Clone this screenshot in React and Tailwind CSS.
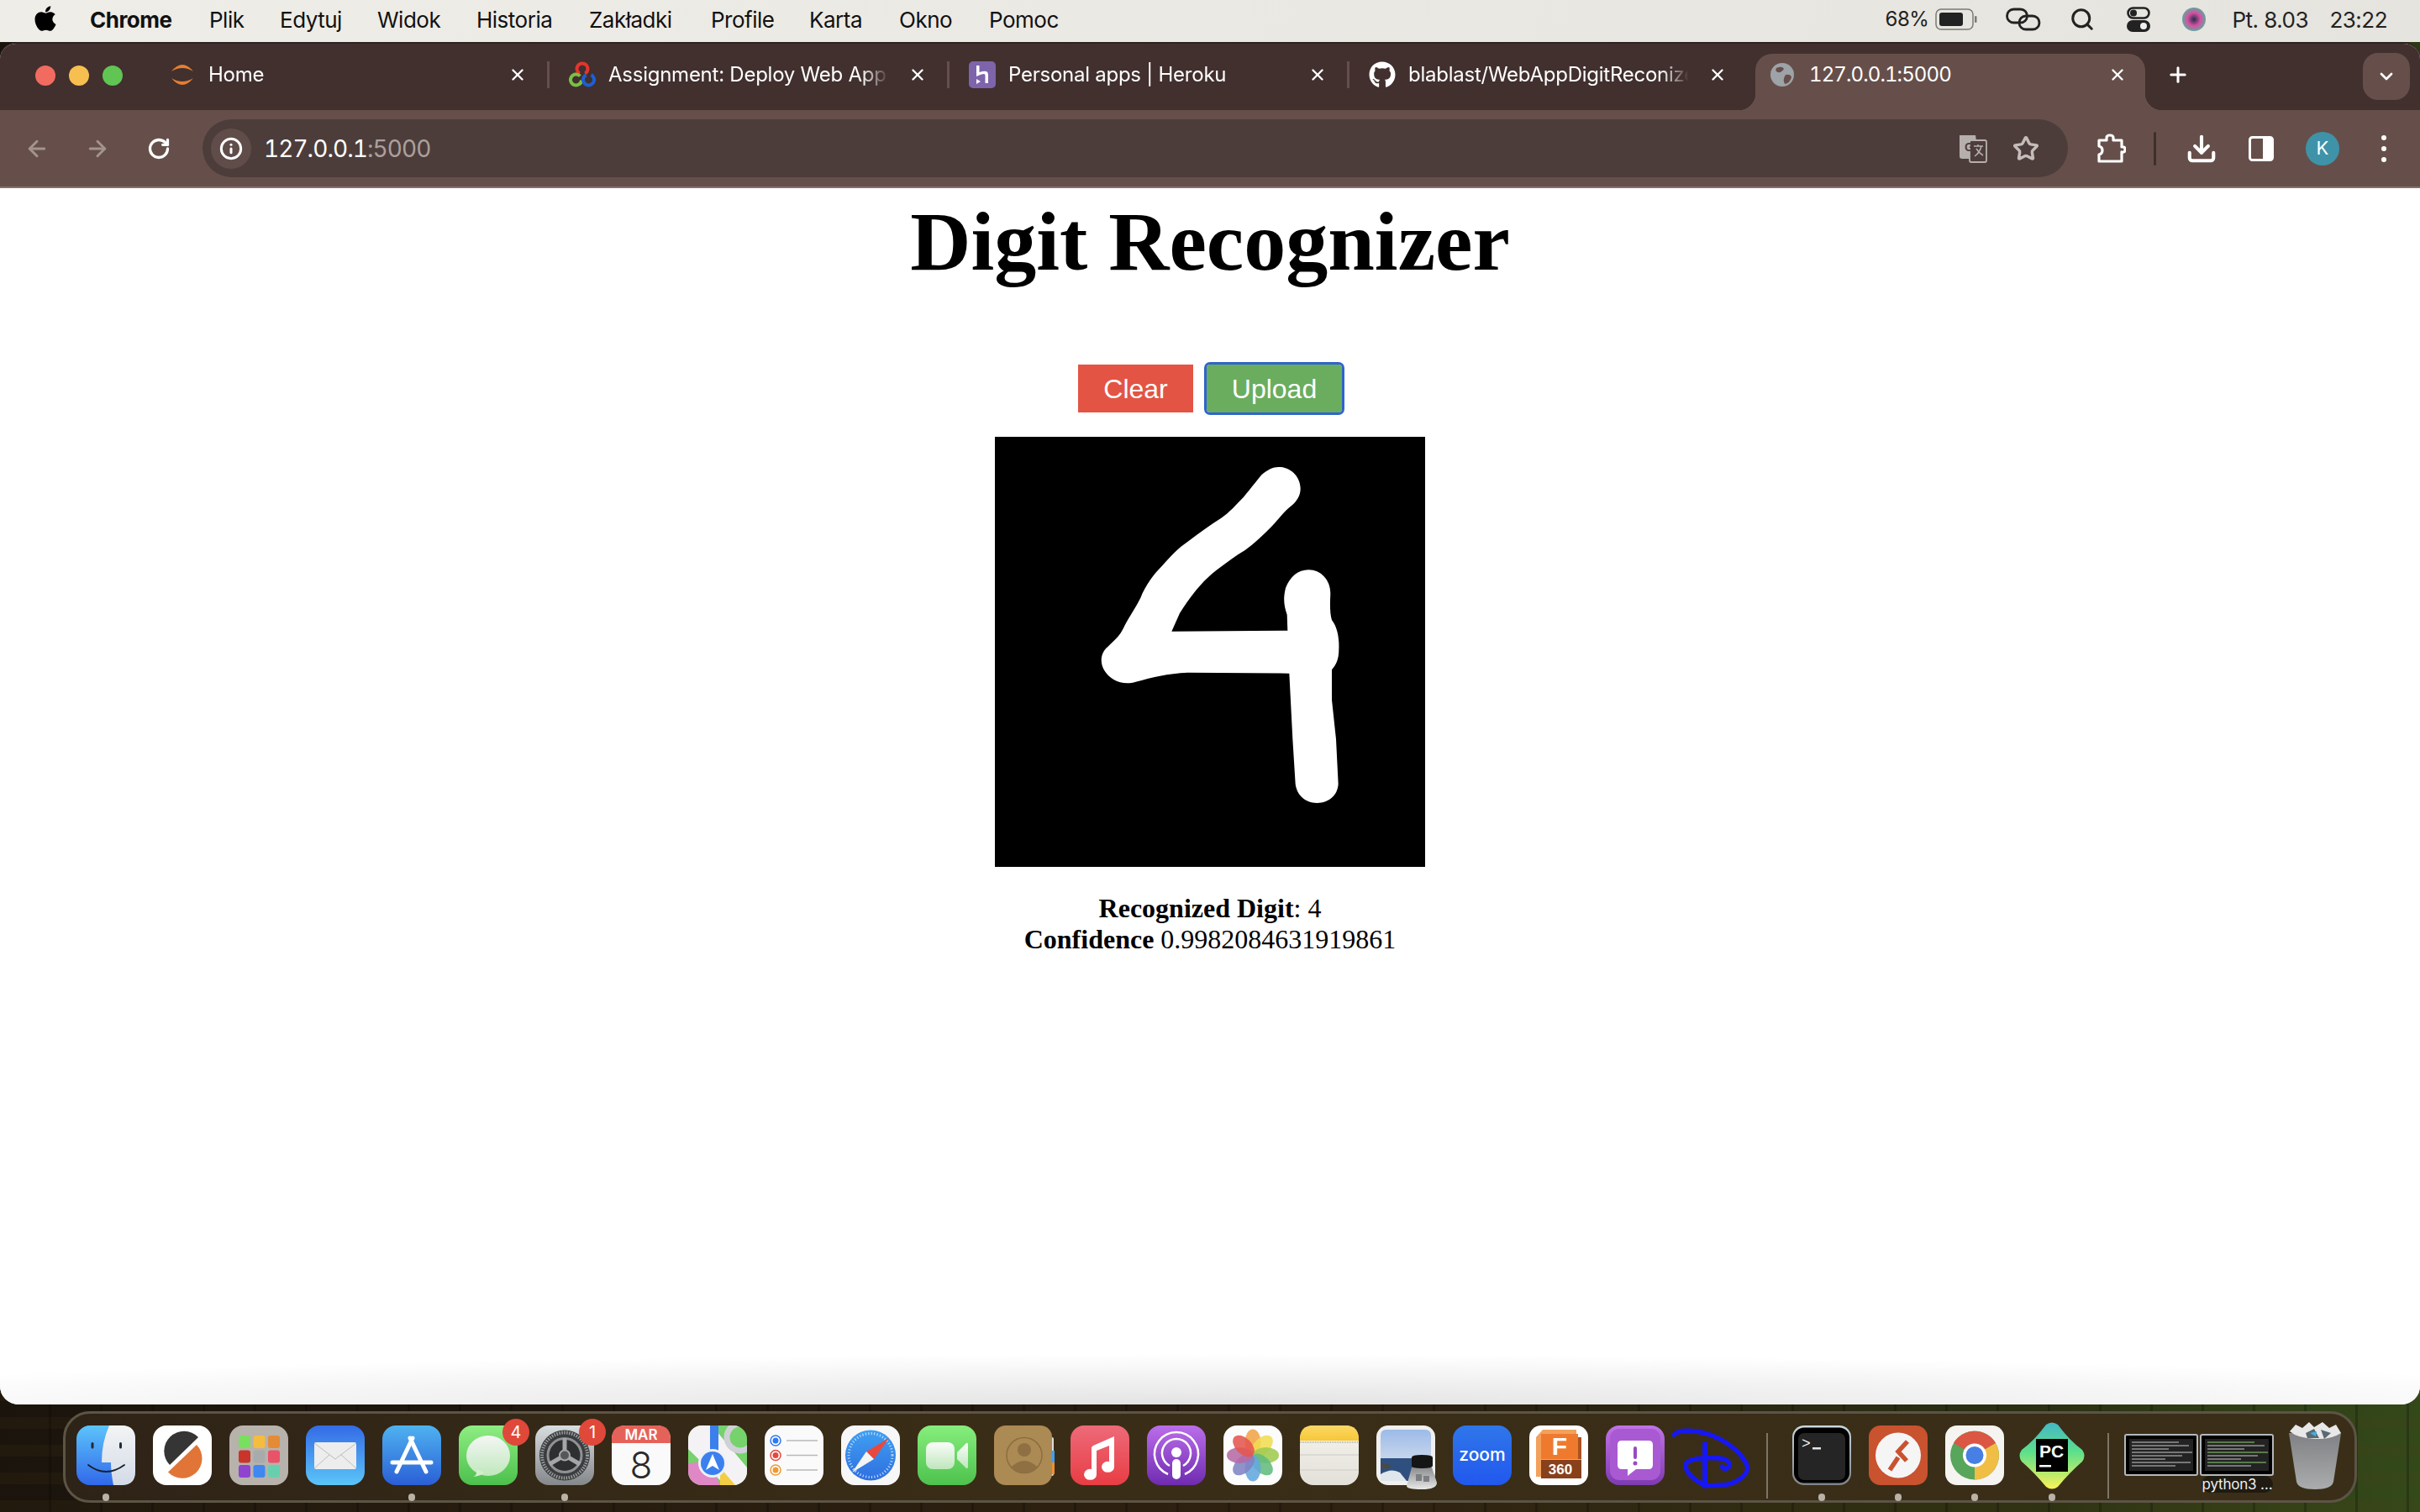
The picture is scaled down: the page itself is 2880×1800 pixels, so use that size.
import React from "react";
import { ArrowLeft, ArrowRight, RotateCw, Info, Star, Download, X, Plus, ChevronDown, Search } from "lucide-react";
import { FaApple, FaGithub } from "react-icons/fa";

const sf = "font-['Inter','Liberation_Sans',sans-serif]";

function I({ children, w = 70, h = 71, vb = "0 0 70 71", className = "" }) {
  return (
    <svg width={w} height={h} viewBox={vb} className={"block overflow-visible " + className}>
      {children}
    </svg>
  );
}

function Grad({ id, a, b, x2 = 0, y2 = 1 }) {
  return (
    <linearGradient id={id} x1="0" y1="0" x2={x2} y2={y2}>
      <stop offset="0" stopColor={a} />
      <stop offset="1" stopColor={b} />
    </linearGradient>
  );
}

const Finder = () => (
  <I>
    <defs><Grad id="fa" a="#5cc4fb" b="#3168ea" /><Grad id="fb" a="#f3f4f5" b="#d3dbe7" /></defs>
    <rect width="70" height="71" rx="16" fill="url(#fa)" />
    <path d="M39 0H54Q70 0 70 16V55Q70 71 54 71H44Q41 56 41 44H30Q30 20 39 0Z" fill="url(#fb)" />
    <rect x="17.500" y="20" width="3" height="7.500" rx="1.500" fill="#1f2a3a" />
    <rect x="51" y="20" width="3" height="7.500" rx="1.500" fill="#1f2a3a" />
    <path d="M14 47Q35 63 57 47" fill="none" stroke="#17202c" strokeWidth="1.800" strokeLinecap="round" />
  </I>
);
const Linear = () => (
  <I>
    <rect width="70" height="71" rx="16" fill="#fff" />
    <path d="M54 14L20 47A23 23 0 0 1 54 14Z" fill="#353535" />
    <path d="M52 23L18 55.500A23 23 0 0 0 52 23Z" fill="#e07537" />
  </I>
);
const Launchpad = () => {
  const c = ["#79df5e", "#f5bc3f", "#e58b35", "#c9352a", "#a8abab", "#e95369", "#8f43cf", "#3f88ef", "#68cfae"];
  return (
    <I>
      <rect width="70" height="71" rx="16" fill="#b7b2ac" />
      {c.map((f, i) => (
        <rect key={i} x={11 + (i % 3) * 17.500} y={12 + Math.floor(i / 3) * 17.500} width="14" height="15" rx="3" fill={f} />
      ))}
    </I>
  );
};
const Mail = () => (
  <I>
    <defs><Grad id="ma" a="#346be6" b="#5bc5f8" /></defs>
    <rect width="70" height="71" rx="16" fill="url(#ma)" />
    <rect x="10" y="20" width="50" height="32" rx="2" fill="#ededed" />
    <path d="M10 21L35 40L60 21M10 51L28 35M60 51L42 35" fill="none" stroke="#bdbdbd" strokeWidth="1" />
  </I>
);
const AppStore = () => (
  <I>
    <defs><Grad id="aa" a="#4fb2f0" b="#2a5fd6" /></defs>
    <rect width="70" height="71" rx="16" fill="url(#aa)" />
    <g stroke="#fff" strokeWidth="5" strokeLinecap="round" fill="none">
      <path d="M36 15L17 55M33 15L52 55M12 44H58" />
    </g>
  </I>
);
const Messages = () => (
  <I>
    <defs><Grad id="ga" a="#8eed82" b="#4cc04c" /><Grad id="gb" a="#f4f6f4" b="#bfe8bc" /></defs>
    <rect width="70" height="71" rx="16" fill="url(#ga)" />
    <ellipse cx="35" cy="36" rx="26" ry="24" fill="url(#gb)" />
    <path d="M21 52Q22 60 17 61Q27 60 30 56Z" fill="#d2efcf" />
  </I>
);
const Settings = () => (
  <I>
    <defs><Grad id="sa" a="#d8dde0" b="#85888a" /></defs>
    <rect width="70" height="71" rx="16" fill="url(#sa)" />
    <circle cx="35" cy="35.500" r="30" fill="#3a3c3e" />
    <circle cx="35" cy="35.500" r="27" fill="none" stroke="#9a9c9e" strokeWidth="4" strokeDasharray="1.500 1.500" />
    <circle cx="35" cy="35.500" r="20" fill="#2d2f31" stroke="#8f9294" strokeWidth="3" />
    <path d="M35 35.500V15M35 35.500L17 46M35 35.500L53 46" stroke="#a4a6a8" strokeWidth="5" />
    <circle cx="35" cy="35.500" r="6" fill="#55585a" stroke="#a4a6a8" strokeWidth="2" />
  </I>
);
const Calendar = () => (
  <I>
    <rect width="70" height="71" rx="16" fill="#fafafa" />
    <path d="M0 21V16Q0 0 16 0H54Q70 0 70 16V21Z" fill="#e5625a" />
    <text x="35" y="17" textAnchor="middle" fill="#fff" fontSize="17" fontWeight="600" fontFamily="Inter">MAR</text>
    <text x="35" y="63" textAnchor="middle" fill="#2a2a2a" fontSize="44" fontWeight="300" fontFamily="Inter">8</text>
  </I>
);
const Maps = () => (
  <I>
    <defs><clipPath id="mc"><rect width="70" height="71" rx="16" /></clipPath></defs>
    <g clipPath="url(#mc)">
      <rect width="70" height="71" fill="#76d26b" />
      <path d="M0 0H28L70 50V71H44L0 28Z" fill="#f4f2f5" />
      <path d="M0 45L25 42L38 71H0Z" fill="#e087c6" />
      <path d="M38 50L56 71H38Z" fill="#f3ce45" />
      <path d="M26 0H36V35H26Z" fill="#3b7fec" />
      <circle cx="62" cy="14" r="16" fill="none" stroke="#d0d0d8" strokeWidth="7" />
      <circle cx="29" cy="45" r="17" fill="#eef1f6" />
      <circle cx="29" cy="45" r="14" fill="#3b80ee" />
      <path d="M29 34L37 53L29 48L21 53Z" fill="#fff" />
    </g>
  </I>
);
const Reminders = () => (
  <I>
    <rect width="70" height="71" rx="16" fill="#fafafa" />
    {[["#2f7af0", 18], ["#e6483d", 35.500], ["#ee9a31", 53]].map(([c, y]) => (
      <g key={y}>
        <circle cx="13" cy={y} r="6" fill="#fff" stroke={c} strokeWidth="1.500" />
        <circle cx="13" cy={y} r="3.500" fill={c} />
        <line x1="26" x2="63" y1={y} y2={y} stroke="#b9b9b9" strokeWidth="1.500" />
      </g>
    ))}
  </I>
);
const Safari = () => (
  <I>
    <defs><Grad id="sb" a="#3fa0f2" b="#2f6fe0" /></defs>
    <rect width="70" height="71" rx="16" fill="#f7f7f7" />
    <circle cx="35" cy="35.500" r="30" fill="url(#sb)" />
    <circle cx="35" cy="35.500" r="26" fill="none" stroke="#cfe6fb" strokeWidth="3" strokeDasharray="1 2.500" />
    <path d="M57 15L30 31L39 40Z" fill="#e9493c" />
    <path d="M13 56L30 31L39 40Z" fill="#f4f4f4" />
  </I>
);
const FaceTime = () => (
  <I>
    <defs><Grad id="fc" a="#86ee7c" b="#4dc24d" /><Grad id="fd" a="#fbfdfb" b="#bfe6bb" /></defs>
    <rect width="70" height="71" rx="16" fill="url(#fc)" />
    <rect x="10" y="20" width="34" height="32" rx="8" fill="url(#fd)" />
    <path d="M47 32L58 21Q60 20 60 23V49Q60 52 58 51L47 40Z" fill="url(#fd)" />
  </I>
);
const Contacts = () => (
  <I>
    <rect x="66" y="14" width="5" height="46" rx="2" fill="#dcdcdc" />
    <rect x="68" y="30" width="4" height="14" fill="#3f9ef0" />
    <rect x="68" y="44" width="4" height="14" fill="#ef8f2d" />
    <rect width="69" height="71" rx="14" fill="#ac8a54" />
    <circle cx="36" cy="35.500" r="21" fill="none" stroke="#8c6d3f" strokeWidth="1.500" />
    <circle cx="36" cy="29" r="8" fill="#8f7043" />
    <path d="M20 50Q36 34 52 50Q36 62 20 50Z" fill="#8f7043" />
  </I>
);
const Music = () => (
  <I>
    <defs><Grad id="mu" a="#ee6a79" b="#e83d44" /></defs>
    <rect width="70" height="71" rx="16" fill="url(#mu)" />
    <path d="M27 24L52 13V49A7.500 6.500 0 1 1 46 43V24L31 30V58A7.500 6.500 0 1 1 25 52V26Z" fill="#fff" />
  </I>
);
const Podcasts = () => (
  <I>
    <defs><Grad id="pa" a="#bb6eea" b="#6f2bb0" /></defs>
    <rect width="70" height="71" rx="16" fill="url(#pa)" />
    <g fill="none" stroke="#fff" strokeWidth="2.500">
      <path d="M25 58A26 26 0 1 1 45 58" />
      <path d="M27 48A17 17 0 1 1 43 48" />
    </g>
    <circle cx="35" cy="32" r="6" fill="#fff" />
    <rect x="30" y="40" width="10" height="24" rx="5" fill="#fff" />
  </I>
);
const Photos = () => {
  const c = ["#f0a448", "#f1dc52", "#9fcb50", "#62bb7d", "#63a7dd", "#7f83c4", "#b56aa4", "#e4564f"];
  return (
    <I>
      <rect width="70" height="71" rx="16" fill="#fcfcfc" />
      {c.map((f, i) => (
        <ellipse key={i} cx="35" cy="20" rx="9.500" ry="15.500" fill={f} opacity=".88" transform={`rotate(${i * 45} 35 35.500)`} />
      ))}
    </I>
  );
};
const Notes = () => (
  <I>
    <defs><Grad id="na" a="#f5f3ec" b="#e3e0da" /><Grad id="nb" a="#fbd866" b="#f7c736" /></defs>
    <rect width="70" height="71" rx="16" fill="url(#na)" />
    <path d="M0 18V16Q0 0 16 0H54Q70 0 70 16V18Z" fill="url(#nb)" />
    <line x1="0" x2="70" y1="20" y2="20" stroke="#bbb" strokeWidth="2" strokeDasharray="1 1" />
    <line x1="0" x2="70" y1="35" y2="35" stroke="#d6d4cf" strokeWidth="1.500" />
    <line x1="0" x2="70" y1="53" y2="53" stroke="#d6d4cf" strokeWidth="1.500" />
  </I>
);
const Preview = () => (
  <I>
    <defs><Grad id="pb" a="#9cbbe8" b="#c8d6ec" /><Grad id="pc" a="#8a8c8e" b="#e8e8e8" /></defs>
    <rect width="70" height="71" rx="14" fill="#f1f0ee" />
    <path d="M5 12Q5 5 12 5H58Q65 5 65 12V40H5Z" fill="url(#pb)" />
    <rect x="5" y="39" width="60" height="27" fill="#2f507f" />
    <path d="M5 58Q18 50 28 56L36 66H5Z" fill="#dfe6ec" />
    <path d="M6 46Q14 44 18 50L8 52Z" fill="#4a4a44" />
    <path d="M36 72L42 50H66L72 68Q72 76 54 76Q36 76 36 72Z" fill="url(#pc)" />
    <path d="M42 48V38Q42 35 54 35Q67 35 67 38V48Q67 51 54 51Q42 51 42 48Z" fill="#151515" />
    <rect x="47" y="58" width="7" height="8" fill="#7d7f82" />
    <rect x="56" y="60" width="7" height="7" fill="#7d7f82" />
  </I>
);
const Zoom = () => (
  <I>
    <defs><Grad id="za" a="#2f76ea" b="#2158ee" /></defs>
    <rect width="70" height="71" rx="16" fill="url(#za)" />
    <text x="35" y="42" textAnchor="middle" fill="#fff" fontSize="21" fontWeight="500" fontFamily="Inter">zoom</text>
  </I>
);
const Fusion = () => (
  <I>
    <rect width="70" height="71" rx="14" fill="#fff" />
    <path d="M8 14L16 5H56V14H62V61H8Z" fill="#f3a05c" />
    <path d="M14 10H58V40H14Z" fill="#ef7a2d" />
    <path d="M58 14H62V40H58Z" fill="#a95220" />
    <rect x="14" y="41" width="48" height="22" fill="#88411a" />
    <text x="36" y="35" textAnchor="middle" fill="#fff" fontSize="30" fontWeight="700" fontFamily="Liberation Sans">F</text>
    <text x="37" y="58" textAnchor="middle" fill="#fff" fontSize="17" fontWeight="700" fontFamily="Liberation Sans">360</text>
  </I>
);
const Feedback = () => (
  <I>
    <defs><Grad id="fe" a="#c173e6" b="#7e3bb0" /></defs>
    <rect width="70" height="71" rx="16" fill="url(#fe)" />
    <rect x="5" y="4" width="60" height="61" rx="11" fill="#a95ad2" />
    <path d="M19 18H51Q56 18 56 23V47Q56 52 51 52H36L26 60V52H19Q14 52 14 47V23Q14 18 19 18Z" fill="#fff" />
    <rect x="33" y="25" width="4" height="15" rx="2" fill="#9b49c5" />
    <circle cx="35" cy="45" r="2.500" fill="#9b49c5" />
  </I>
);
const Disney = () => (
  <I w={88} h={72} vb="0 0 88 72">
    <g fill="none" stroke="#1717f2" strokeLinecap="round" strokeWidth="5.500">
      <path d="M-3 11C2 5 20 5 33 9C50 13 75 27 84 47C88 58 70 72 50 71C38 72 33 72 28 68C18 62 11 55 11 47C12 42 22 39 33 39C48 38 60 38 63 45C65 50 58 54 54 49" />
      <path d="M34 22V72" strokeWidth="6" />
    </g>
  </I>
);
const Terminal = () => (
  <I>
    <defs><Grad id="ta" a="#c9d8df" b="#7f8386" /></defs>
    <rect width="70" height="71" rx="14" fill="url(#ta)" />
    <rect x="2" y="2.500" width="66" height="66" rx="12" fill="#000" />
    <rect x="7" y="9" width="56" height="56" rx="7" fill="#252525" />
    <text x="11" y="27" fill="#f2f2f2" fontSize="18" fontFamily="Liberation Mono">&gt;</text>
    <rect x="24" y="26" width="10" height="2.500" fill="#e5e5e5" />
  </I>
);
const Remote = () => (
  <I>
    <rect width="70" height="71" rx="14" fill="#c9522f" />
    <circle cx="35" cy="35.500" r="27" fill="#f5f5f5" />
    <g stroke="#c9522f" strokeWidth="5.500" fill="none">
      <path d="M46 19L35 31L45 42" />
      <path d="M35 38L25 53" />
    </g>
  </I>
);
const Chrome = () => (
  <I>
    <rect width="70" height="71" rx="14" fill="#f5f4f1" />
    <circle cx="35" cy="35.500" r="29" fill="#58a55c" />
    <path d="M35 35.500L10 21A29 29 0 0 1 60 21Z" fill="#dc5644" />
    <path d="M35 35.500L60 21A29 29 0 0 1 35 64.500Z" fill="#f0be45" />
    <circle cx="35" cy="35.500" r="14" fill="#fff" />
    <circle cx="35" cy="35.500" r="10.500" fill="#477fe4" />
  </I>
);
const PyCharm = () => (
  <I w={78} h={80} vb="0 0 78 80">
    <defs><linearGradient id="pya" x1="0" y1="0" x2="0" y2="1"><stop offset="0" stopColor="#43b7c6" /><stop offset=".45" stopColor="#5ee08a" /><stop offset="1" stopColor="#fbf358" /></linearGradient></defs>
    <path d="M32 3Q39 -2 46 3Q60 22 75 33Q80 40 75 47Q60 60 46 77Q39 82 32 77Q18 60 3 47Q-2 40 3 33Q18 22 32 3Z" fill="url(#pya)" />
    <rect x="20" y="20" width="38" height="39" fill="#000" />
    <text x="24" y="42" fill="#fff" fontSize="21" fontWeight="700" fontFamily="Liberation Sans">PC</text>
    <rect x="24" y="51" width="14" height="2.500" fill="#fff" />
  </I>
);
const Thumb = ({ green }) => (
  <div className="w-[88px] h-[50px] rounded-[3px] border-2 border-[#b4b8bb] bg-black p-[4px]">
    <div className="h-full bg-[#232323] flex flex-col gap-[2px] p-[3px] overflow-hidden">
      {[56, 68, 44, 72, 60, 40, 70, 52].map((w, i) => (
        <div key={i} style={{ width: w }} className={"h-[2px] " + (green && i % 3 === 0 ? "bg-[#5a7a4a]" : "bg-[#777]")} />
      ))}
    </div>
  </div>
);
const Trash = () => (
  <I w={62} h={82} vb="0 0 62 82">
    <defs><Grad id="tr" a="#808184" b="#aaacad" /></defs>
    <path d="M0 14L9 72Q11 81 31 81Q51 81 53 72L62 14Z" fill="url(#tr)" />
    <path d="M1 12L8 4L16 8L24 1L30 7L40 1L48 8L56 4L62 14Q50 22 31 21Q10 20 1 12Z" fill="#e8e8e8" />
    <path d="M20 14L30 9L36 20H22ZM38 10L50 14L42 21Z" fill="#5a6a72" />
    <path d="M25 14L33 12L32 18Z" fill="#3fb2e0" />
  </I>
);

const tabs = [
  {
    title: "Home",
    icon: (
      <svg width="30" height="30" viewBox="0 0 30 30">
        <path d="M2 11Q15 -5 28 11Q15 3 2 11ZM2 19Q15 35 28 19Q15 27 2 19Z" fill="#e57f31" />
      </svg>
    ),
  },
  {
    title: "Assignment: Deploy Web App",
    icon: (
      <svg width="32" height="32" viewBox="0 0 32 32" fill="none" strokeWidth="4">
        <path d="M12.800 14.600A6.500 6.500 0 1 1 19.200 14.600" stroke="#e4352c" />
        <path d="M13.300 17.600A6.500 6.500 0 1 0 15 22.500" stroke="#7ac043" />
        <path d="M20.500 16.200A6.500 6.500 0 1 0 26.500 16.200" stroke="#1d5fd5" />
      </svg>
    ),
  },
  {
    title: "Personal apps | Heroku",
    icon: (
      <svg width="32" height="32" viewBox="0 0 32 32">
        <rect width="32" height="32" rx="5" fill="#7d64ab" />
        <path d="M9 5H12.500V13Q18 11 21 12Q23 13 23 16V26H19.500V17Q19.500 15 18 15Q15 15 9 18ZM9 21L14 24L9 27Z" fill="#fff" />
      </svg>
    ),
  },
  {
    title: "blablast/WebAppDigitReconizer",
    icon: <FaGithub size={32} color="#fff" />,
  },
];

function Separator() {
  return <div className="w-[3px] h-[32px] bg-[#654f4b]" />;
}

function Tab({ t, last }) {
  return (
    <div className="w-[476px] h-full flex items-center pl-[23px] shrink-0">
      <div className="w-[32px] flex justify-center shrink-0">{t.icon}</div>
      <div className={"ml-[15px] w-[334px] whitespace-nowrap overflow-hidden text-[24px] text-white tracking-[-0.25px] [mask-image:linear-gradient(to_right,black_90%,transparent)] " + sf}>
        {t.title}
      </div>
      <X size={22} color="#fff" strokeWidth={2.6} className="ml-[23px] shrink-0" />
      {!last && <div className="ml-auto"><Separator /></div>}
    </div>
  );
}

function DockItem({ children, dot, badge }) {
  return (
    <div className="relative w-[70px] flex flex-col items-center shrink-0">
      {children}
      {!!dot && <div className="absolute top-[81px] w-[8px] h-[9px] rounded-full bg-[#b9b2a5]" />}
      {!!badge && (
        <div className={"absolute -top-[8px] right-[-14px] w-[32px] h-[32px] rounded-full bg-[#e0483a] text-white text-[20px] flex items-center justify-center " + sf}>
          {badge}
        </div>
      )}
    </div>
  );
}

const dockA = [
  [Finder, 1], [Linear], [Launchpad], [Mail], [AppStore, 1], [Messages, 0, 4], [Settings, 1, 1], [Calendar], [Maps], [Reminders],
  [Safari], [FaceTime], [Contacts], [Music], [Podcasts], [Photos], [Notes], [Preview], [Zoom], [Fusion], [Feedback],
];

export default function App() {
  return (
    <div className="relative w-[2880px] h-[1800px] overflow-hidden flex flex-col bg-[#1d160e] bg-[repeating-linear-gradient(90deg,transparent_0,transparent_58px,rgba(0,0,0,0.22)_58px,rgba(0,0,0,0.22)_61px),repeating-linear-gradient(0deg,rgba(80,60,20,0.14)_0,rgba(80,60,20,0.14)_14px,transparent_14px,transparent_33px),linear-gradient(100deg,#19130c_0%,#1f170e_30%,#2a1d10_60%,#2a3012_85%,#344a1a_100%)]">
      {/* menu bar */}
      <header className={"h-[50px] shrink-0 flex items-center pl-[37px] pr-[39px] pb-[4px] bg-[linear-gradient(90deg,#efede7,#e6e4de)] text-[26px] text-[#111] tracking-[-0.5px] " + sf}>
        <FaApple size={34} color="#000" className="mb-[3px]" />
        <span className="ml-[36px] font-bold w-[142px]">Chrome</span>
        <span className="w-[84px]">Plik</span>
        <span className="w-[116px]">Edytuj</span>
        <span className="w-[118px]">Widok</span>
        <span className="w-[134px]">Historia</span>
        <span className="w-[145px]">Zakładki</span>
        <span className="w-[117px]">Profile</span>
        <span className="w-[107px]">Karta</span>
        <span className="w-[107px]">Okno</span>
        <span>Pomoc</span>
        <div className="ml-auto flex items-center text-[#222]">
          <span className="text-[24px]">68%</span>
          <svg width="50" height="26" viewBox="0 0 50 26" className="ml-[8px]">
            <rect x="1" y="1" width="44" height="24" rx="6" fill="none" stroke="#7b7a76" strokeWidth="1.500" />
            <rect x="5" y="5" width="28" height="16" rx="3" fill="#222" />
            <rect x="47" y="9" width="2.500" height="8" rx="1" fill="#7b7a76" />
          </svg>
          <svg width="42" height="28" viewBox="0 0 42 28" fill="none" stroke="#222" strokeWidth="2.800" className="ml-[34px]">
            <rect x="1.500" y="2" width="24" height="16" rx="8" />
            <rect x="16" y="10" width="24" height="16" rx="8" />
          </svg>
          <Search size={30} color="#222" strokeWidth={2.4} className="ml-[34px]" />
          <svg width="28" height="30" viewBox="0 0 28 30" className="ml-[38px]">
            <rect x="1.500" y="1.500" width="25" height="12" rx="6" fill="none" stroke="#222" strokeWidth="2.600" />
            <circle cx="8" cy="7.500" r="4" fill="#222" />
            <rect x="0" y="16" width="28" height="14" rx="7" fill="#222" />
            <circle cx="20" cy="23" r="4" fill="#eee" />
          </svg>
          <svg width="28" height="28" viewBox="0 0 28 28" className="ml-[38px]">
            <defs><radialGradient id="si" cx=".5" cy=".5" r=".55"><stop offset="0" stopColor="#20304f" /><stop offset=".5" stopColor="#d84fa0" /><stop offset="1" stopColor="#47b8a0" /></radialGradient></defs>
            <circle cx="14" cy="14" r="14" fill="url(#si)" />
          </svg>
          <span className="ml-[31px] w-[116px]">Pt. 8.03</span>
          <span>23:22</span>
        </div>
      </header>

      {/* browser window */}
      <main className="h-[1622px] shrink-0 flex flex-col rounded-t-[20px] rounded-b-[22px] overflow-hidden bg-white border-t-[2px] border-[#2b2422]">
        {/* tab strip */}
        <div className="h-[79px] shrink-0 flex bg-[#41302e]">
          <div className="flex items-center pl-[42px] pr-[32px] gap-[16px] pb-[4px]">
            <div className="w-[24px] h-[24px] rounded-full bg-[#f26b60]" />
            <div className="w-[24px] h-[24px] rounded-full bg-[#f6bf4f]" />
            <div className="w-[24px] h-[24px] rounded-full bg-[#61c554]" />
          </div>
          <div className="flex-1 flex items-stretch pt-[12px]">
            {tabs.map((t, i) => (
              <div key={i} className={"flex items-center pb-[17px] " + (i === 3 ? "mr-[7px]" : "")}>
                <Tab t={t} last={i === 3} />
              </div>
            ))}
            <div className="relative w-[464px] shrink-0 rounded-t-[20px] bg-[#664f4a] flex items-center pl-[18px] pb-[17px] before:content-[''] before:absolute before:left-[-20px] before:bottom-0 before:w-[20px] before:h-[20px] before:bg-[radial-gradient(circle_at_0_0,#41302e_20px,#664f4a_20.5px)] after:content-[''] after:absolute after:right-[-20px] after:bottom-0 after:w-[20px] after:h-[20px] after:bg-[radial-gradient(circle_at_100%_0,#41302e_20px,#664f4a_20.5px)]">
              <svg width="28" height="28" viewBox="0 0 28 28">
                <circle cx="14" cy="14" r="14" fill="#9ea3a8" />
                <path d="M7 6Q14 3 16 7Q13 12 9 11Q5 10 7 6ZM18 14Q24 13 25 17Q23 24 17 25Q14 20 18 14Z" fill="#664f4a" />
              </svg>
              <span className={"ml-[18px] text-[24px] text-white w-[356px] tabular-nums tracking-[-0.9px] " + sf}>127.0.0.1:5000</span>
              <X size={22} color="#fff" strokeWidth={2.6} />
            </div>
            <div className="flex items-center pl-[25px] pb-[17px]">
              <Plus size={28} color="#fff" strokeWidth={2.6} />
            </div>
            <div className="ml-auto mr-[12px] mt-[-1px] w-[56px] h-[56px] rounded-[18px] bg-[#664f4a] flex items-center justify-center self-start">
              <ChevronDown size={24} color="#fff" strokeWidth={2.8} />
            </div>
          </div>
        </div>

        {/* toolbar */}
        <div className="h-[93px] shrink-0 flex items-center pl-[29px] pr-[30px] bg-[#664f4a] border-b-[2px] border-[#84706b]">
          <ArrowLeft size={30} color="#a3938f" strokeWidth={2.4} />
          <ArrowRight size={30} color="#a3938f" strokeWidth={2.4} className="ml-[42px]" />
          <RotateCw size={28} color="#fff" strokeWidth={2.8} className="ml-[44px]" />
          <div className="ml-[38px] w-[2220px] h-[69px] rounded-full bg-[#4d3d3a] flex items-center pl-[10px] pr-[34px]">
            <div className="w-[48px] h-[48px] rounded-full bg-[#604d49] flex items-center justify-center">
              <Info size={28} color="#fff" strokeWidth={2.6} />
            </div>
            <span className={"ml-[15px] text-[28px] text-white tabular-nums tracking-[-0.95px] " + sf}>
              127.0.0.1<span className="text-[#aba09d]">:5000</span>
            </span>
            <svg width="34" height="34" viewBox="0 0 34 34" className="ml-auto">
              <path d="M1 1H20L24 29H4Q1 29 1 26Z" fill="#b6b0ad" />
              <rect x="13" y="7" width="20" height="26" rx="2" fill="#4d3d3a" stroke="#b6b0ad" strokeWidth="1.800" />
              <text x="7" y="20" fontSize="14" fontWeight="700" fill="#4d3d3a" fontFamily="Liberation Sans">G</text>
              <path d="M18 14H29M23 12V14M27 14Q25 22 19 26M21 17Q24 22 29 25" stroke="#b6b0ad" strokeWidth="1.500" fill="none" />
            </svg>
            <Star size={32} color="#c5bcb9" strokeWidth={2.6} className="ml-[30px]" />
          </div>
          <svg width="36" height="36" viewBox="0 0 36 36" fill="none" stroke="#fff" strokeWidth="3.200" className="ml-[33px]">
            <path d="M4 8H13V5Q13 2 17 2Q21 2 21 5V8H31V16Q35 15 35 19Q35 23 31 22V33H4V25Q8 24 8 20Q8 16 4 15Z" strokeLinejoin="round" />
          </svg>
          <div className="ml-[33px] w-[3px] h-[40px] bg-[#3d2f2c] rounded" />
          <Download size={38} color="#fff" strokeWidth={2.6} className="ml-[35px]" />
          <svg width="30" height="30" viewBox="0 0 30 30" className="ml-[37px]">
            <rect x="1.500" y="1.500" width="27" height="27" rx="3" fill="none" stroke="#fff" strokeWidth="3" />
            <rect x="17" y="1.500" width="11.500" height="27" fill="#fff" />
          </svg>
          <div className={"ml-[38px] w-[40px] h-[40px] rounded-full bg-[#3f93a8] text-white text-[22px] flex items-center justify-center " + sf}>K</div>
          <div className="ml-[50px] flex flex-col gap-[7px]">
            <div className="w-[6px] h-[6px] rounded-full bg-white" />
            <div className="w-[6px] h-[6px] rounded-full bg-white" />
            <div className="w-[6px] h-[6px] rounded-full bg-white" />
          </div>
        </div>

        {/* page */}
        <div className="flex-1 flex flex-col items-center font-['Liberation_Serif',serif] text-black">
          <h1 className="mt-[21px] text-[100px] leading-[86px] font-bold">Digit Recognizer</h1>
          <div className="mt-[103px] flex gap-[16px] font-['Liberation_Sans',sans-serif] text-[32px] text-white">
            <button className="w-[137px] h-[57px] bg-[#e35444]">Clear</button>
            <button className="w-[161px] h-[57px] bg-[#6aad5f] rounded-[4px] outline-[3px] outline-[#2f64cc]">Upload</button>
          </div>
          <div className="mt-[29px] w-[512px] h-[512px] bg-black">
            <svg width="512" height="512" viewBox="-288 -60 1536 1536">
              <path
                fill="#fff"
                d="M725 48C770 48 803 85 803 125C803 150 790 170 770 187C745 205 725 235 700 260C670 290 640 320 605 345C570 365 540 390 505 415C465 445 425 490 385 550L372 570L343 635L757 632L755 575C745 545 740 520 750 480C765 440 795 415 832 415C875 415 910 450 910 500C908 540 908 570 915 595C935 620 942 660 940 700C940 735 930 755 915 772L915 880L930 1020L938 1180C936 1220 905 1248 862 1248C820 1248 790 1220 785 1180L775 1020L763 785L400 782C330 785 270 800 215 815C170 830 125 810 103 775C85 745 90 710 115 690C140 665 160 650 175 615C190 585 215 550 232 515C250 470 280 430 310 400C340 365 370 335 400 315C440 285 480 255 520 230C550 210 575 180 600 155C625 125 640 105 665 75C685 58 705 48 725 48Z"
              />
            </svg>
          </div>
          <div className="mt-[31px] text-[32px] leading-[37px] text-center">
            <div><b>Recognized Digit</b>: 4</div>
            <div><b>Confidence</b> 0.9982084631919861</div>
          </div>
        </div>
        <div className="h-[60px] shrink-0 bg-[radial-gradient(ellipse_1800px_60px_at_50%_100%,#e3e3e3,#ffffff)]" />
      </main>

      {/* dock */}
      <nav className="mt-[8px] ml-[75px] w-[2730px] h-[109px] shrink-0 rounded-[32px] border-[3px] border-[#5c5445] bg-[linear-gradient(90deg,#2e2317,#3a2d17_40%,#3a2e18)] flex pl-[13px] pt-[14px] gap-[21px]">
        {dockA.map(([C, dot, badge], i) => (
          <DockItem key={i} dot={dot} badge={badge}><C /></DockItem>
        ))}
        <div className="shrink-0 ml-[-7px] w-[88px]"><Disney /></div>
        <div className="ml-[-2px] mt-[9px] w-[2px] h-[78px] bg-[#7d7565] shrink-0" />
        <div className="ml-[8px]"><DockItem dot><Terminal /></DockItem></div>
        <DockItem dot><Remote /></DockItem>
        <DockItem dot><Chrome /></DockItem>
        <div className="relative w-[78px] shrink-0 -mt-[4px] ml-[-3px] mr-[-3px]">
          <PyCharm />
          <div className="absolute top-[85px] left-[35px] w-[8px] h-[9px] rounded-full bg-[#b9b2a5]" />
        </div>
        <div className="mt-[9px] w-[2px] h-[78px] bg-[#7d7565] shrink-0 ml-[9px]" />
        <div className="ml-[-3px] flex shrink-0 gap-[2px] pt-[10px] relative">
          <Thumb />
          <Thumb green />
          <div className={"absolute left-[92px] top-[60px] w-[85px] h-[20px] rounded-full bg-[#1f1b12] text-[#eee] text-[17px] leading-[20px] text-center tracking-[-0.2px] " + sf}>python3 …</div>
        </div>
        <div className="ml-[-3px] -mt-[5px]"><Trash /></div>
      </nav>
    </div>
  );
}
